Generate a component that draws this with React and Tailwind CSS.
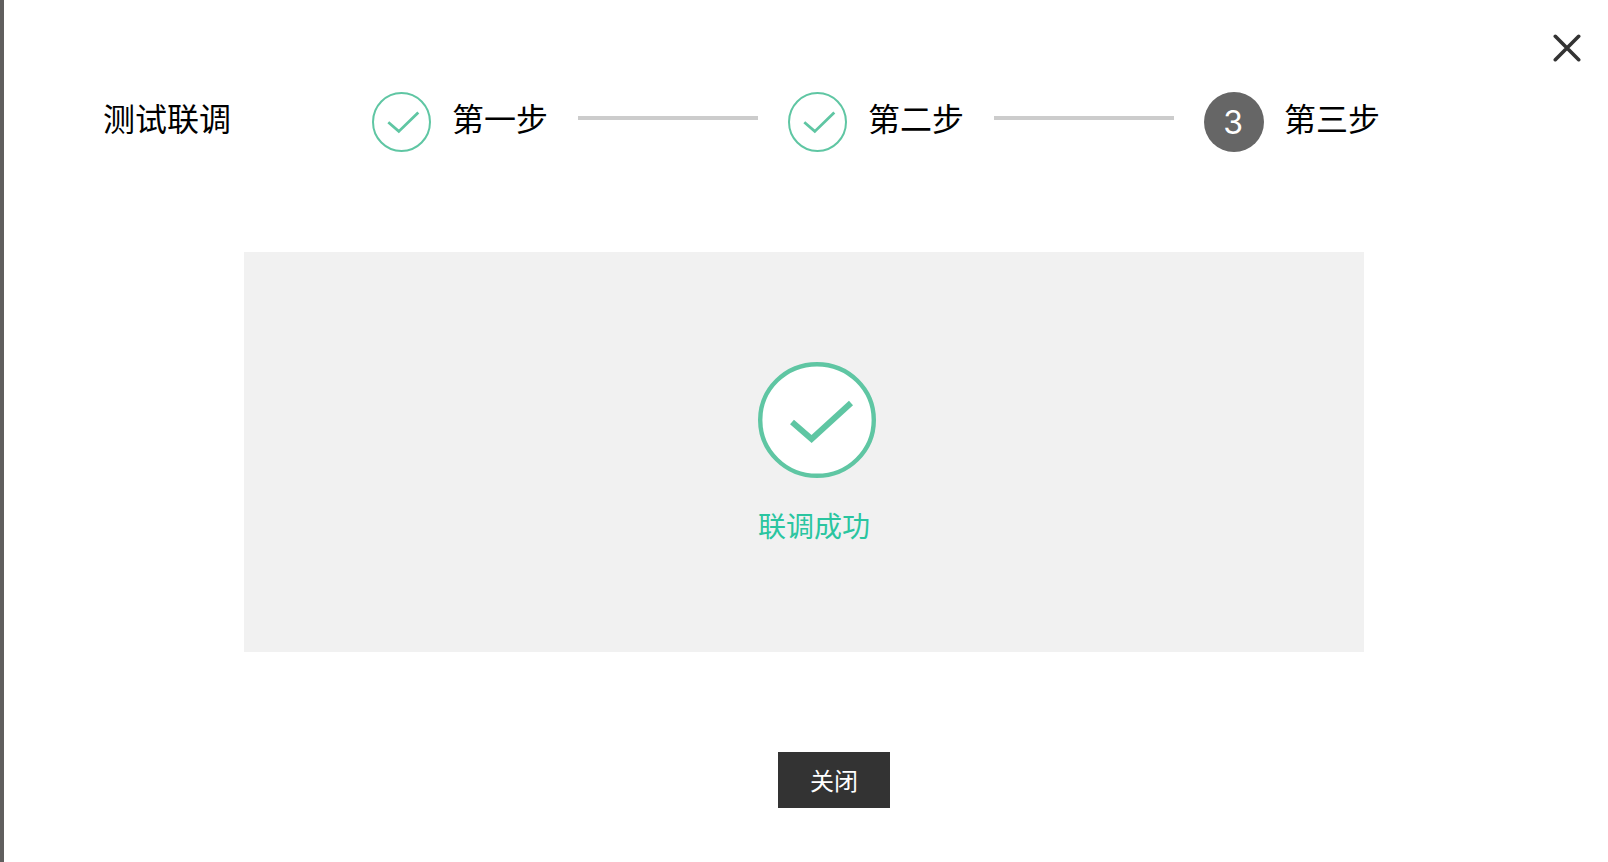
function StepCheck({ className }) {
  return (
    <svg className={className} viewBox="0 0 60 60" fill="none" stroke="#5fc6a3" aria-hidden="true">
      <ellipse cx="29.5" cy="30" rx="28.5" ry="29" strokeWidth="2" />
      <path d="M16.3 30.2 L26.8 39.4 L46.3 20.5" strokeWidth="2.8" />
    </svg>
  )
}

function SuccessCheck({ className }) {
  return (
    <svg className={className} viewBox="0 0 118 116" fill="none" stroke="#5fc6a3" aria-hidden="true">
      <ellipse cx="59" cy="58" rx="56.8" ry="55.8" fill="#ffffff" strokeWidth="4.4" />
      <path d="M34 60 L53.6 77 L93 41" strokeWidth="6" />
    </svg>
  )
}

const steps = [
  { number: 1, label: '第一步', done: true },
  { number: 2, label: '第二步', done: true },
  { number: 3, label: '第三步', done: false },
]

function Step({ number, label, done }) {
  return (
    <div className="flex shrink-0 items-center gap-5">
      <div className="pt-2">
        {done ? (
          <StepCheck className="size-[60px]" />
        ) : (
          <span className="flex size-[60px] items-center justify-center rounded-full bg-[#666666] pt-0.5 pr-0.5 font-['Inter','Liberation_Sans',sans-serif] text-white">
            {number}
          </span>
        )}
      </div>
      <span className="pb-0.5">{label}</span>
    </div>
  )
}

export default function App() {
  return (
    <main className="flex min-h-screen flex-col border-l-4 border-[#605f5e] bg-white font-['Noto_Sans_CJK_SC',sans-serif] text-black">
      <div className="flex h-[84px] items-start justify-end pt-[29px] pr-[22px]">
        <button type="button" aria-label="关闭窗口" className="flex size-[38px] items-center justify-center">
          <svg className="size-[28px]" viewBox="0 0 28 28" fill="none" stroke="#333333" strokeWidth="3.6" strokeLinecap="round" aria-hidden="true">
            <path d="M2.3 2.3 L25.7 25.7 M25.7 2.3 L2.3 25.7" />
          </svg>
        </button>
      </div>

      <header className="flex items-center pl-[99px] text-[32px] leading-[48px]">
        <h1 className="mr-[141px] shrink-0 pb-0.5">测试联调</h1>
        <ol className="flex items-center">
          {steps.map((step, i) => (
            <li key={step.number} className="flex items-center">
              {i > 0 && <span className="mx-[30px] h-1 w-[180px] bg-[#cccccc]" />}
              <Step {...step} />
            </li>
          ))}
        </ol>
      </header>

      <section className="mt-[100px] mr-[244px] ml-[240px] flex justify-center bg-[#f1f1f1] pt-[110px] pb-[106px] pl-[26px]">
        <div className="flex flex-col items-start">
          <SuccessCheck className="h-[116px] w-[118px]" />
          <p className="mt-[26px] text-[28px] leading-[42px] text-[#2ac5a0]">联调成功</p>
        </div>
      </section>

      <div className="mt-[100px] flex justify-center pl-[56px]">
        <button type="button" className="h-14 w-28 bg-[#333333] text-[24px] leading-[36px] text-white">
          关闭
        </button>
      </div>
    </main>
  )
}
